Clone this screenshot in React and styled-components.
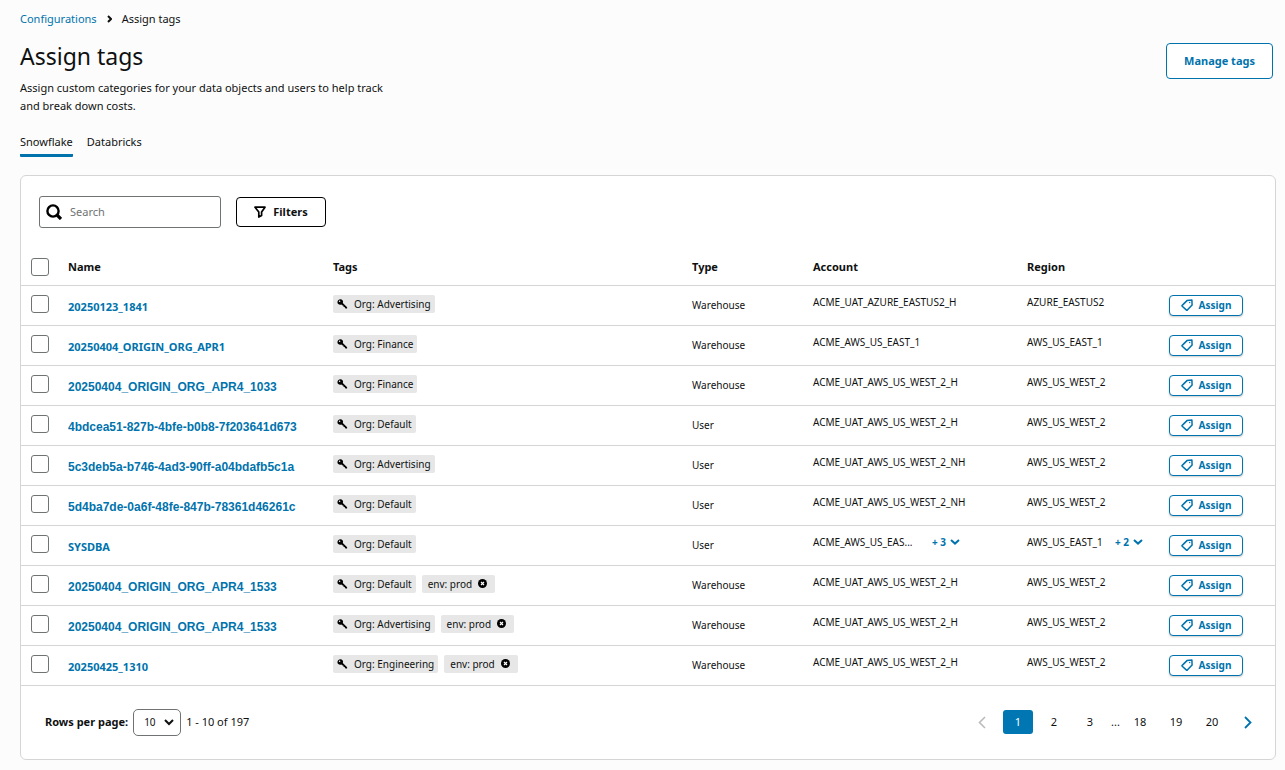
import React from 'react';
import styled, {createGlobalStyle} from 'styled-components';

const blue = '#0073ad';

const GlobalStyle = createGlobalStyle`
  * {
    box-sizing: border-box;
  }

  body {
    margin: 0;
    background: #fcfcfc;
    color: #0f1111;
    font: 11px/18px "Noto Sans", "Open Sans", sans-serif;
  }

  button, input, select {
    font: inherit;
    color: inherit;
  }

  a {
    color: ${blue};
    text-decoration: none;
  }

  svg {
    flex: none;
    display: block;
  }
`;

const Page = styled.main`
  padding: 10px 9px 10px 20px;
`;

const Breadcrumb = styled.nav`
  display: flex;
  align-items: center;
  gap: 10px;
`;

const Header = styled.header`
  display: flex;
  justify-content: space-between;
  align-items: flex-start;
  padding: 15px 3px 0 0;
`;

const Title = styled.h1`
  margin: 0;
  font-size: 23px;
  line-height: 26px;
  font-weight: 400;
`;

const Description = styled.p`
  margin: 10px 0 0;
  max-width: 380px;
`;

const ManageButton = styled.button`
  width: 107px;
  height: 36px;
  padding: 0;
  border: 1px solid ${blue};
  border-radius: 4px;
  background: #fff;
  color: ${blue};
  font-weight: 700;
`;

const Tabs = styled.div`
  display: flex;
  gap: 14px;
  margin-top: 18px;
`;

const Tab = styled.button`
  height: 24px;
  padding: 0 0 3px;
  border: 0;
  border-bottom: 3px solid ${({$active}) => ($active ? blue : 'transparent')};
  border-radius: 1px;
  background: none;
`;

const Card = styled.section`
  margin-top: 18px;
  border: 1px solid #d5d5d5;
  border-radius: 6px;
  background: #fff;
`;

const Toolbar = styled.div`
  display: flex;
  align-items: center;
  gap: 15px;
  padding: 20px 18px;
`;

const SearchBox = styled.label`
  display: flex;
  align-items: center;
  gap: 8px;
  width: 182px;
  height: 32px;
  padding: 0 6px;
  border: 1px solid #6f7373;
  border-radius: 3px;

  input {
    flex: 1;
    min-width: 0;
    padding: 0;
    border: 0;
    outline: none;
    background: none;

    &::placeholder {
      color: #6f7373;
      opacity: 1;
    }
  }
`;

const FilterButton = styled.button`
  display: flex;
  align-items: center;
  justify-content: center;
  gap: 7px;
  width: 90px;
  height: 30px;
  padding: 0;
  border: 1px solid #000;
  border-radius: 4px;
  background: #fff;
  font-weight: 700;
`;

const Table = styled.table`
  width: 100%;
  table-layout: fixed;
  border-collapse: collapse;

  th, td {
    padding: 9px 0 0;
    border-bottom: 1px solid #d5d5d5;
    vertical-align: top;
    text-align: left;
    white-space: nowrap;
  }

  th {
    height: 37px;
    padding-top: 10px;
    font-weight: 700;
  }

  td {
    height: 40px;
    font-size: 10px;
  }

  th:first-child, td:first-child {
    padding-left: 10px;
  }
`;

const Check = styled.input`
  appearance: none;
  display: block;
  width: 18px;
  height: 18px;
  margin: 0;
  border: 1px solid #6f7373;
  border-radius: 3px;
  background: #fff;

  &:checked {
    background: ${blue};
  }
`;

const NameLink = styled.a`
  display: block;
  font-size: ${({$plain}) => ($plain ? '12px' : '11px')};
  font-family: ${({$plain}) => ($plain ? '"Liberation Sans", Arial, sans-serif' : 'inherit')};
  line-height: 24px;
  font-weight: 700;
`;

const TypeText = styled.div`
  line-height: 20px;
`;

const TagList = styled.div`
  display: flex;
  gap: 6px;
`;

const Tag = styled.span`
  display: flex;
  align-items: center;
  gap: 6px;
  height: 18px;
  padding: 0 4px;
  border-radius: 2px;
  background: #e7e7e7;
`;

const RemovableTag = styled(Tag)`
  padding: 0 8px 0 6px;
`;

const RemoveButton = styled.button`
  padding: 0;
  border: 0;
  background: none;
`;

const Place = styled.div`
  display: flex;
  align-items: center;
  gap: 10px;
  line-height: 14px;
`;

const PlaceName = styled.span`
  min-width: ${({$min}) => $min}px;
`;

const MoreButton = styled.button`
  display: flex;
  align-items: center;
  gap: 4px;
  padding: 0;
  border: 0;
  background: none;
  color: ${blue};
  font-weight: 700;
`;

const AssignButton = styled.button`
  display: flex;
  align-items: center;
  justify-content: center;
  gap: 6px;
  width: 74px;
  height: 21px;
  padding: 0;
  border: 1px solid ${blue};
  border-radius: 4px;
  background: #fff;
  box-shadow: 0 1px 2px rgba(0, 0, 0, 0.2);
  color: ${blue};
  font-size: 10px;
  font-weight: 700;
`;

const Footer = styled.div`
  display: flex;
  align-items: center;
  justify-content: space-between;
  height: 73px;
  padding: 0 12px 0 24px;
`;

const RowsPerPage = styled.div`
  display: flex;
  align-items: center;
  gap: 5px;

  label {
    font-weight: 700;
  }
`;

const SelectBox = styled.div`
  display: grid;
  align-items: center;

  > * {
    grid-area: 1 / 1;
  }

  select {
    appearance: none;
    width: 48px;
    height: 27px;
    padding: 0 0 0 10px;
    border: 1px solid #6f7373;
    border-radius: 5px;
    background: #fff;
    font-size: 10px;
  }

  svg {
    justify-self: end;
    margin-right: 7px;
    pointer-events: none;
  }
`;

const Pagination = styled.nav`
  display: flex;
  align-items: center;
  gap: 6px;
`;

const PageButton = styled.button`
  display: flex;
  align-items: center;
  justify-content: center;
  width: 30px;
  height: 24px;
  padding: 0;
  border: 0;
  border-radius: 3px;
  background: ${({$active}) => ($active ? '#0077b3' : 'none')};
  color: ${({$active}) => ($active ? '#fff' : 'inherit')};
`;

const Dots = styled.span`
  width: 8px;
`;

const Chevron = ({width, height, points, color = 'currentColor', stroke = 2}) => (
    <svg width={width} height={height} fill="none" stroke={color} strokeWidth={stroke}>
        <polyline points={points}/>
    </svg>
);

const SearchIcon = () => (
    <svg width="16" height="16" fill="none" stroke="#000">
        <circle cx="7" cy="7" r="5.6" strokeWidth="2.4"/>
        <path d="M11 11l4 4" strokeWidth="3.2"/>
    </svg>
);

const FunnelIcon = () => (
    <svg width="12" height="12" fill="none" stroke="#000" strokeWidth="1.7" strokeLinejoin="round">
        <path d="M1 1.2h10L7.6 6v3.4L4.8 11V6z"/>
    </svg>
);

const KeyIcon = () => (
    <svg width="11" height="10">
        <path fillRule="evenodd" d="M1.4 1.1C2.6-.2 4.6 0 5.5 1.2c.7.9.7 1.9.3 2.8l4.3 4.3v1.3H8.6L7.8 8.8V8H7L6.3 7.3V6.6h-.7L4.4 5.4C3.3 6 2 5.8 1.2 5 .1 3.900.2 2.200 1.400 1.100zM2.100 1.700a.7.7 0 1 0 1 1 .7.7 0 0 0-1-1z"/>
    </svg>
);

const RemoveIcon = () => (
    <svg width="9" height="9">
        <circle cx="4.5" cy="4.5" r="4.5" fill="#000"/>
        <path d="M3 3l3 3M6 3L3 6" stroke="#fff" strokeWidth="1.2"/>
    </svg>
);

const TagIcon = () => (
    <svg width="12" height="12" fill="none" stroke="currentColor" strokeWidth="1.5" strokeLinejoin="round">
        <path d="M6 1.600L10.900 1.100l.2 4.900-4.800 5.100q-.4.400-.8 0L1.200 7.200q-.4-.4 0-.8z"/>
        <circle cx="8.700" cy="3.500" r=".7" fill="currentColor" stroke="none"/>
    </svg>
);

const rows = [
    {name: '20250123_1841', org: 'Advertising', type: 'Warehouse', account: 'ACME_UAT_AZURE_EASTUS2_H', region: 'AZURE_EASTUS2'},
    {name: '20250404_ORIGIN_ORG_APR1', org: 'Finance', type: 'Warehouse', account: 'ACME_AWS_US_EAST_1', region: 'AWS_US_EAST_1'},
    {name: '20250404_ORIGIN_ORG_APR4_1033', plain: true, org: 'Finance', type: 'Warehouse', account: 'ACME_UAT_AWS_US_WEST_2_H', region: 'AWS_US_WEST_2'},
    {name: '4bdcea51-827b-4bfe-b0b8-7f203641d673', plain: true, org: 'Default', type: 'User', account: 'ACME_UAT_AWS_US_WEST_2_H', region: 'AWS_US_WEST_2'},
    {name: '5c3deb5a-b746-4ad3-90ff-a04bdafb5c1a', plain: true, org: 'Advertising', type: 'User', account: 'ACME_UAT_AWS_US_WEST_2_NH', region: 'AWS_US_WEST_2'},
    {name: '5d4ba7de-0a6f-48fe-847b-78361d46261c', plain: true, org: 'Default', type: 'User', account: 'ACME_UAT_AWS_US_WEST_2_NH', region: 'AWS_US_WEST_2'},
    {name: 'SYSDBA', org: 'Default', type: 'User', account: 'ACME_AWS_US_EAS...', moreAccounts: 3, region: 'AWS_US_EAST_1', moreRegions: 2},
    {name: '20250404_ORIGIN_ORG_APR4_1533', plain: true, org: 'Default', env: 'prod', type: 'Warehouse', account: 'ACME_UAT_AWS_US_WEST_2_H', region: 'AWS_US_WEST_2'},
    {name: '20250404_ORIGIN_ORG_APR4_1533', plain: true, org: 'Advertising', env: 'prod', type: 'Warehouse', account: 'ACME_UAT_AWS_US_WEST_2_H', region: 'AWS_US_WEST_2'},
    {name: '20250425_1310', org: 'Engineering', env: 'prod', type: 'Warehouse', account: 'ACME_UAT_AWS_US_WEST_2_H', region: 'AWS_US_WEST_2'},
];

const PlaceCell = ({name, more, min}) => (
    <Place>
        <PlaceName $min={min}>{name}</PlaceName>
        {more && (
            <MoreButton type="button">
                + {more}
                <Chevron width="10" height="6" points="1,1 5,4.6 9,1"/>
            </MoreButton>
        )}
    </Place>
);

const Row = ({row}) => (
    <tr>
        <td><Check type="checkbox" aria-label={`Select ${row.name}`}/></td>
        <td><NameLink href="#" $plain={row.plain}>{row.name}</NameLink></td>
        <td>
            <TagList>
                <Tag><KeyIcon/>Org: {row.org}</Tag>
                {row.env && (
                    <RemovableTag>
                        env: {row.env}
                        <RemoveButton type="button" aria-label="Remove tag"><RemoveIcon/></RemoveButton>
                    </RemovableTag>
                )}
            </TagList>
        </td>
        <td><TypeText>{row.type}</TypeText></td>
        <td><PlaceCell name={row.account} more={row.moreAccounts} min={109}/></td>
        <td><PlaceCell name={row.region} more={row.moreRegions} min={78}/></td>
        <td><AssignButton type="button"><TagIcon/>Assign</AssignButton></td>
    </tr>
);

const App = () => {
    return (
        <Page>
            <GlobalStyle/>
            <Breadcrumb aria-label="Breadcrumb">
                <a href="#">Configurations</a>
                <Chevron width="5" height="8" points="1,1 4,4 1,7"/>
                <span>Assign tags</span>
            </Breadcrumb>
            <Header>
                <div>
                    <Title>Assign tags</Title>
                    <Description>
                        Assign custom categories for your data objects and users to help track and break down costs.
                    </Description>
                </div>
                <ManageButton type="button">Manage tags</ManageButton>
            </Header>
            <Tabs role="tablist">
                <Tab type="button" role="tab" aria-selected="true" $active>Snowflake</Tab>
                <Tab type="button" role="tab" aria-selected="false">Databricks</Tab>
            </Tabs>
            <Card>
                <Toolbar>
                    <SearchBox>
                        <SearchIcon/>
                        <input type="text" placeholder="Search" aria-label="Search"/>
                    </SearchBox>
                    <FilterButton type="button"><FunnelIcon/>Filters</FilterButton>
                </Toolbar>
                <Table>
                    <colgroup>
                        <col width="47"/>
                        <col width="265"/>
                        <col/>
                        <col width="121"/>
                        <col width="214"/>
                        <col width="142"/>
                        <col width="106"/>
                    </colgroup>
                    <thead>
                        <tr>
                            <th><Check type="checkbox" aria-label="Select all"/></th>
                            <th>Name</th>
                            <th>Tags</th>
                            <th>Type</th>
                            <th>Account</th>
                            <th>Region</th>
                            <th aria-label="Actions"/>
                        </tr>
                    </thead>
                    <tbody>
                        {rows.map((row, i) => <Row key={i} row={row}/>)}
                    </tbody>
                </Table>
                <Footer>
                    <RowsPerPage>
                        <label htmlFor="rows-per-page">Rows per page:</label>
                        <SelectBox>
                            <select id="rows-per-page" defaultValue="10">
                                <option>10</option>
                                <option>25</option>
                                <option>50</option>
                            </select>
                            <Chevron width="10" height="7" points="1,1 5,5 9,1"/>
                        </SelectBox>
                        <span>1 - 10 of 197</span>
                    </RowsPerPage>
                    <Pagination aria-label="Pages">
                        <PageButton type="button" aria-label="Previous page" disabled>
                            <Chevron width="8" height="13" points="7,1 1.5,6.5 7,12" color="#bbb" stroke={1.6}/>
                        </PageButton>
                        <PageButton type="button" $active>1</PageButton>
                        <PageButton type="button">2</PageButton>
                        <PageButton type="button">3</PageButton>
                        <Dots>...</Dots>
                        <PageButton type="button">18</PageButton>
                        <PageButton type="button">19</PageButton>
                        <PageButton type="button">20</PageButton>
                        <PageButton type="button" aria-label="Next page">
                            <Chevron width="8" height="13" points="1,1 6.5,6.5 1,12" color={blue} stroke={1.8}/>
                        </PageButton>
                    </Pagination>
                </Footer>
            </Card>
        </Page>
    );
};

export default App;
